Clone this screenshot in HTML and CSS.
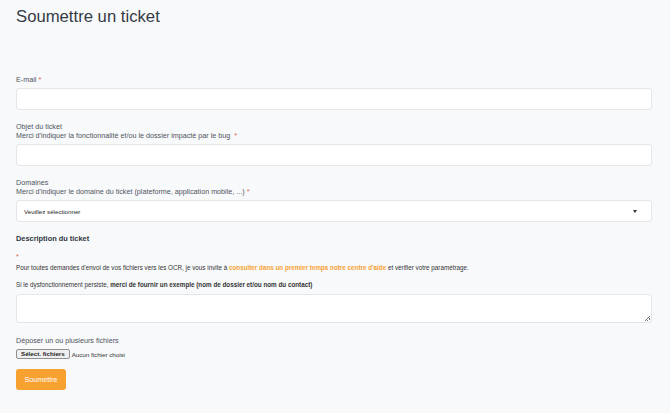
FILE: index.html
```html
<!DOCTYPE html>
<html lang="fr">
<head>
  <meta charset="UTF-8" />
  <title>Soumettre un ticket</title>
  <link rel="stylesheet" href="styles.css">
</head>
<body>
  <div class="page">
    <h1>Soumettre un ticket</h1>

    <form class="ticket-form">
      <!-- email -->
      <div class="field">
        <label class="label">E-mail <span class="req">*</span></label>
        <div class="input"></div>
      </div>

      <!-- subject -->
      <div class="field">
        <label class="label">Objet du ticket<br>Merci d'indiquer la fonctionnalité et/ou le dossier impacté par le bug &nbsp;<span class="req">*</span></label>
        <div class="input"></div>
      </div>

      <!-- domain -->
      <div class="field">
        <label class="label">Domaines<br>Merci d'indiquer le domaine du ticket (plateforme, application mobile, ...) <span class="req">*</span></label>
        <div class="input select">
          <span>Veuillez sélectionner</span>
          <span class="caret"></span>
        </div>
      </div>

      <!-- description -->
      <div class="field desc">
        <div class="desc-title">Description du ticket</div>
        <div class="req star">*</div>
        <p class="note first">Pour toutes demandes d'envoi de vos fichiers vers les OCR, je vous invite à <a href="#">consulter dans un premier temps notre centre d'aide</a> et vérifier votre paramétrage.</p>
        <p class="note">Si le dysfonctionnement persiste, <b>merci de fournir un exemple (nom de dossier et/ou nom du contact)</b></p>
        <div class="input textarea"><span class="grip"></span></div>
      </div>

      <!-- files -->
      <div class="field files">
        <label class="label">Déposer un ou plusieurs fichiers</label>
        <div class="file-row">
          <span class="file-btn">Sélect. fichiers</span>
          <span class="file-none">Aucun fichier choisi</span>
        </div>
      </div>

      <button class="submit" type="button">Soumettre</button>
    </form>
  </div>
</body>
</html>
```

FILE: styles.css
```css
*{box-sizing:border-box}
body{
  margin:0;
  background:#f8f9fb;
  font-family:"Liberation Sans",Arial,sans-serif;
  color:#3a3f48;
}
.page{padding:0 18px 0 16px}
h1{
  margin:0;
  padding-top:7px;
  font-size:16.7px;
  font-weight:400;
  color:#353b45;
  line-height:20px;
}

.ticket-form{display:flex;flex-direction:column;margin-top:48px}
.field{display:flex;flex-direction:column;margin-bottom:11.5px}
.label{
  font-size:7.2px;
  line-height:9.5px;
  color:#4f555e;
  margin-bottom:3.5px;
}
.req{color:#e05a4e}

.input{
  height:22px;
  background:#fff;
  border:1px solid #e3e6ea;
  border-radius:3px;
}
.select{
  display:flex;
  align-items:center;
  justify-content:space-between;
  padding:0 14px 0 7px;
  font-size:6.2px;
  color:#222;
}
.caret{
  width:0;height:0;
  border-left:2.5px solid transparent;
  border-right:2.5px solid transparent;
  border-top:3px solid #333;
}

/* description block */
.desc{margin-bottom:13px}
.desc-title{font-size:7.4px;font-weight:700;color:#2f3540;line-height:10px}
.star{font-size:7px;line-height:8px;margin-top:9px}
.note{margin:8px 0 0;font-size:6.3px;line-height:9px;color:#333}
.note.first{margin-top:2.5px}
.note a{color:#f7a131;font-weight:700;text-decoration:none}
.note b{color:#333}
.textarea{height:29px;position:relative;margin-top:4.5px}
.grip{
  position:absolute;right:1px;bottom:1px;
  width:5px;height:5px;
  background:linear-gradient(135deg,transparent 45%,#777 45%,#777 55%,transparent 55%,transparent 70%,#777 70%,#777 80%,transparent 80%);
}

/* file picker */
.files{margin-bottom:10px}
.files .label{margin-bottom:4px}
.file-row{display:flex;align-items:center;gap:2px;font-size:6.2px;height:10px}
.file-btn{
  background:#efefef;
  border:1px solid #8f8f8f;
  border-radius:2px;
  padding:0 4px;
  height:10px;
  line-height:8px;
  font-weight:700;
  color:#222;
}
.file-none{color:#333}

.submit{
  align-self:flex-start;
  width:50px;
  height:21px;
  background:#f7a131;
  color:#fff;
  border:none;
  border-radius:3px;
  font-family:inherit;
  font-size:7.2px;
  padding:0;
}
```
